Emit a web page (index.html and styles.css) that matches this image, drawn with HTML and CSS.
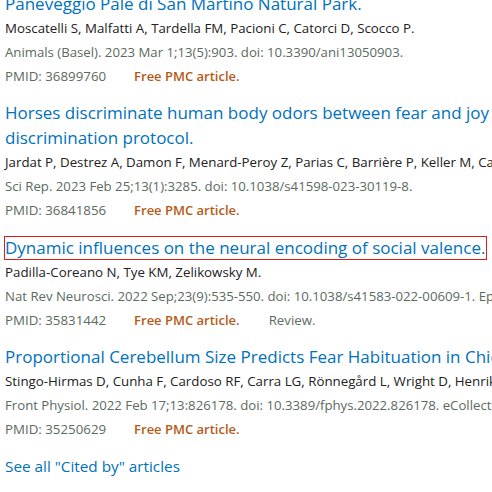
FILE: index.html
```html
<!DOCTYPE html>
<html lang="en">
<head>
<meta charset="utf-8">
<title>Cited by</title>
<link rel="stylesheet" href="styles.css">
</head>
<body>
<div class="page">
  <div class="docsum">
    <a class="title" href="#">Paneveggio Pale di San Martino Natural Park.</a>
    <div class="authors">Moscatelli S, Malfatti A, Tardella FM, Pacioni C, Catorci D, Scocco P.</div>
    <div class="citation">Animals (Basel). 2023 Mar 1;13(5):903. doi: 10.3390/ani13050903.</div>
    <div class="meta"><span class="pmid">PMID: 36899760</span><span class="free">Free PMC article.</span></div>
  </div>
  <div class="docsum">
    <a class="title" href="#">Horses discriminate human body odors between fear and joy contexts in a habituation-<br>discrimination protocol.</a>
    <div class="authors">Jardat P, Destrez A, Damon F, Menard-Peroy Z, Parias C, Barrière P, Keller M, Calandreau L, Lansade L.</div>
    <div class="citation">Sci Rep. 2023 Feb 25;13(1):3285. doi: 10.1038/s41598-023-30119-8.</div>
    <div class="meta"><span class="pmid">PMID: 36841856</span><span class="free">Free PMC article.</span></div>
  </div>
  <div class="docsum">
    <a class="title" href="#"><span class="focused">Dynamic influences on the neural encoding of social valence.</span></a>
    <div class="authors">Padilla-Coreano N, Tye KM, Zelikowsky M.</div>
    <div class="citation">Nat Rev Neurosci. 2022 Sep;23(9):535-550. doi: 10.1038/s41583-022-00609-1. Epub 2022 Jul 13.</div>
    <div class="meta"><span class="pmid">PMID: 35831442</span><span class="free">Free PMC article.</span><span class="type">Review.</span></div>
  </div>
  <div class="docsum">
    <a class="title" href="#">Proportional Cerebellum Size Predicts Fear Habituation in Chickens.</a>
    <div class="authors">Stingo-Hirmas D, Cunha F, Cardoso RF, Carra LG, Rönnegård L, Wright D, Henriksen R.</div>
    <div class="citation">Front Physiol. 2022 Feb 17;13:826178. doi: 10.3389/fphys.2022.826178. eCollection 2022.</div>
    <div class="meta"><span class="pmid">PMID: 35250629</span><span class="free">Free PMC article.</span></div>
  </div>
  <a class="see-all" href="#">See all "Cited by" articles</a>
</div>
</body>
</html>
```
FILE: styles.css
```css
html, body {
  margin: 0;
  padding: 0;
  background: #ffffff;
  overflow: hidden;
}
.page {
  width: 800px;
  margin-top: -9.5px;
  padding-left: 5px;
  font-family: "Open Sans", "Noto Sans", sans-serif;
}
.docsum {
  margin-bottom: 12.5px;
}
.title {
  display: block;
  font-size: 17px;
  line-height: 25px;
  color: #0071bc;
  text-decoration: none;
  white-space: nowrap;
}
.focused {
  display: inline-block;
  margin-left: -1px;
  padding-right: 1px;
  line-height: 22px;
  border: 1px solid #e31b1b;
}
.authors {
  font-size: 13.3px;
  line-height: 24px;
  color: #212121;
  white-space: nowrap;
}
.citation {
  font-size: 13.2px;
  line-height: 24px;
  color: #5a6a5e;
  white-space: nowrap;
}
.meta {
  font-size: 13.3px;
  line-height: 24px;
  white-space: nowrap;
}
.pmid {
  color: #5a6a5e;
}
.free {
  margin-left: 28px;
  font-size: 13px;
  font-weight: 600;
  color: #b45a17;
}
.type {
  margin-left: 29px;
  color: #5f6a62;
}
.see-all {
  display: block;
  margin-top: 10.5px;
  font-size: 15.3px;
  line-height: 24px;
  color: #0071bc;
  text-decoration: none;
}
```
